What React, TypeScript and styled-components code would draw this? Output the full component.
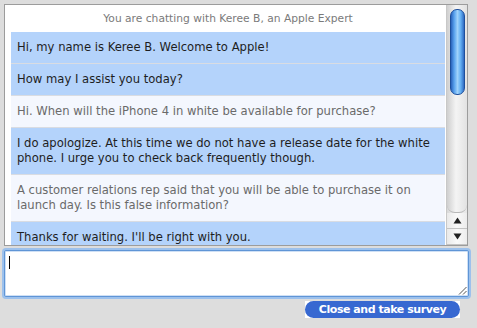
import React from "react"
import styled, { createGlobalStyle } from "styled-components"

const GlobalStyle = createGlobalStyle`
  html, body {
    margin: 0;
    padding: 0;
    background: #dddddd;
    width: 477px;
    height: 328px;
    overflow: hidden;
  }
  body {
    font-family: "DejaVu Sans", Verdana, sans-serif;
  }
`

type Msg = { text: string; agent: boolean }

const messages: Msg[] = [
  { text: "Hi, my name is Keree B. Welcome to Apple!", agent: true },
  { text: "How may I assist you today?", agent: true },
  { text: "Hi. When will the iPhone 4 in white be available for purchase?", agent: false },
  {
    text: "I do apologize. At this time we do not have a release date for the white phone. I urge you to check back frequently though.",
    agent: true,
  },
  {
    text: "A customer relations rep said that you will be able to purchase it on launch day. Is this false information?",
    agent: false,
  },
  { text: "Thanks for waiting. I'll be right with you.", agent: true },
]

export default function App() {
  return (
    <>
      <GlobalStyle />
      <Page>
        <ChatBox>
          <Transcript>
            <Header>You are chatting with Keree B, an Apple Expert</Header>
            {messages.map((m, i) => (
              <Message key={i} agent={m.agent}>
                {m.text}
              </Message>
            ))}
          </Transcript>
          <ScrollBar>
            <Track>
              <Thumb />
            </Track>
            <ArrowButton>
              <svg width="9" height="7" viewBox="0 0 9 7">
                <path d="M4.5 0.5 L8.5 6.5 L0.5 6.5 Z" fill="#222" />
              </svg>
            </ArrowButton>
            <ArrowButton>
              <svg width="9" height="7" viewBox="0 0 9 7">
                <path d="M0.5 0.5 L8.5 0.5 L4.5 6.5 Z" fill="#222" />
              </svg>
            </ArrowButton>
          </ScrollBar>
        </ChatBox>

        <InputBox>
          <Caret />
          <Grip width="9" height="9" viewBox="0 0 9 9">
            <path d="M8.5 1 L1 8.5 M8.5 5 L5 8.5" stroke="#555" strokeWidth="1" />
          </Grip>
        </InputBox>

        <Footer>
          <SurveyButton>
            <Pill>Close and take survey</Pill>
          </SurveyButton>
        </Footer>
      </Page>
    </>
  )
}

const Page = styled.div`
  display: flex;
  flex-direction: column;
  padding: 4px 8px 0 4px;
  width: 477px;
  box-sizing: border-box;
`

const ChatBox = styled.div`
  display: flex;
  width: 464px;
  height: 242px;
  box-sizing: border-box;
  border: 1px solid #9c9c9c;
  background: #ffffff;
  overflow: hidden;
`

const Transcript = styled.div`
  flex: 1;
  display: flex;
  flex-direction: column;
  padding: 0 1px 0 6px;
  overflow: hidden;
`

const Header = styled.div`
  height: 27px;
  line-height: 27px;
  flex-shrink: 0;
  text-align: center;
  font-size: 10.7px;
  color: #7a7a7a;
`

const Message = styled.div<{ agent: boolean }>`
  flex-shrink: 0;
  padding: 8px 6px;
  font-size: 11.6px;
  line-height: 15px;
  color: ${({ agent }) => (agent ? "#1e1e1e" : "#6a6a6a")};
  background: ${({ agent }) => (agent ? "#b4d3fb" : "#f4f7fe")};
  border-bottom: 1px solid #d9dce2;
`

const ScrollBar = styled.div`
  width: 20px;
  flex-shrink: 0;
  display: flex;
  flex-direction: column;
  background: linear-gradient(to right, #d8d8d8, #f2f2f2 40%, #e6e6e6);
  border-left: 1px solid #c8c8c8;
`

const Track = styled.div`
  flex: 1;
  padding: 4px 2px 0 3px;
  border-bottom: 1px solid #b8b8b8;
  background: linear-gradient(to right, #cfcfcf, #f4f4f4 45%, #e2e2e2);
  border-radius: 0 0 8px 8px;
`

const Thumb = styled.div`
  height: 84px;
  border-radius: 7px;
  border: 1px solid #1d4f9c;
  background: linear-gradient(
    to right,
    #2a63bb,
    #5aa3ee 25%,
    #9fd2fb 50%,
    #62aef2 75%,
    #2f6ac2
  );
`

const ArrowButton = styled.div`
  height: 15px;
  display: flex;
  align-items: center;
  justify-content: center;
  border-bottom: 1px solid #c4c4c4;
  background: linear-gradient(to right, #e9e9e9, #fafafa 50%, #ececec);
`

const InputBox = styled.div`
  position: relative;
  margin-top: 4px;
  width: 465px;
  height: 47px;
  box-sizing: border-box;
  border: 1px solid #5f95d6;
  box-shadow: 0 0 0 2px #9dc1ec, inset 0 0 0 1px #cfe0f5;
  border-radius: 2px;
  background: #ffffff;
  padding: 5px 4px;
`

const Caret = styled.span`
  display: block;
  width: 1px;
  height: 13px;
  background: #000000;
`

const Grip = styled.svg`
  position: absolute;
  right: 1px;
  bottom: 1px;
`

const Footer = styled.div`
  display: flex;
  justify-content: flex-end;
  margin-top: 4px;
  padding-right: 9px;
`

const SurveyButton = styled.div`
  background: #ffffff;
`

const Pill = styled.div`
  width: 155px;
  height: 17px;
  line-height: 17px;
  border-radius: 9px;
  background: #3768d1;
  color: #ffffff;
  font-family: "DejaVu Sans", Verdana, sans-serif;
  font-weight: bold;
  font-size: 11px;
  letter-spacing: -0.45px;
  text-align: center;
`
